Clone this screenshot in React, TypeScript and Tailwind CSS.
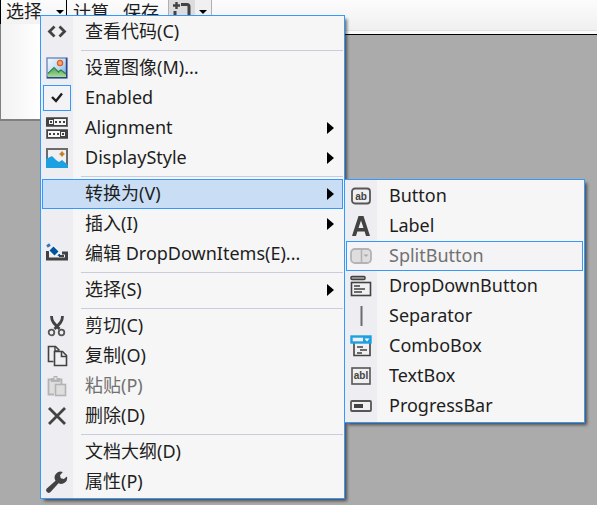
import type { ReactNode } from "react";

type Item = {
  label: string;
  icon?: ReactNode;
  submenu?: boolean;
  disabled?: boolean;
  state?: "open" | "hover";
  checkbox?: boolean;
};

function Icon({ children }: { children: ReactNode }) {
  return (
    <svg width="22" height="22" viewBox="0 0 22 22" fill="none" aria-hidden="true">
      {children}
    </svg>
  );
}

const ink = "#424242";

const codeIcon = (
  <Icon>
    <path d="M8.500 5.500 3.500 10.500l5 5M13.500 5.500l5 5-5 5" stroke={ink} strokeWidth="2.800" />
  </Icon>
);

const imageIcon = (
  <Icon>
    <defs>
      <linearGradient id="sky" x1="0" y1="0" x2="1" y2="1">
        <stop offset="0" stopColor="#f4f9ff" />
        <stop offset="0.5" stopColor="#c4dcf8" />
        <stop offset="1" stopColor="#6d9fe0" />
      </linearGradient>
      <linearGradient id="hill" x1="0" y1="0" x2="0" y2="1">
        <stop offset="0" stopColor="#4ea65a" />
        <stop offset="1" stopColor="#a9dc98" />
      </linearGradient>
    </defs>
    <rect x="1" y="1" width="20" height="20" fill="url(#sky)" stroke="#7089b8" strokeWidth="1.400" />
    <path d="M20.500 1v19.500H1" stroke="#2b4487" strokeWidth="1.400" />
    <circle cx="14" cy="6" r="2.600" fill="#f6a56b" stroke="#d9622b" strokeWidth="1.300" />
    <path d="M2 17l6-6 4 4 3-2 5 4v3H2z" fill="url(#hill)" />
    <path d="M2 16.500l6-6 5 5M12 15l3-2 5 4" stroke="#2f8040" strokeWidth="1.200" />
  </Icon>
);

const alignIcon = (
  <Icon>
    <rect x="0" y="0" width="22" height="10" rx="0.500" fill="#6b6b6b" />
    <rect x="0" y="1" width="21" height="8" fill={ink} />
    <rect x="8" y="2" width="12" height="6" fill="#f6f6f6" />
    <rect x="3" y="3" width="4" height="4" fill="#f6f6f6" />
    <path d="M4 4h2v2H4zM9 4h2v2H9zM13 4h2v2h-2zM17 4h2v2h-2z" fill={ink} />
    <rect x="0" y="12" width="22" height="10" rx="0.500" fill="#6b6b6b" />
    <rect x="1" y="13" width="21" height="8" fill={ink} />
    <rect x="2" y="14" width="12" height="6" fill="#f6f6f6" />
    <rect x="15" y="15" width="4" height="4" fill="#f6f6f6" />
    <path d="M3 16h2v2H3zM7 16h2v2H7zM11 16h2v2h-2zM16 16h2v2h-2z" fill={ink} />
  </Icon>
);

const pictureIcon = (
  <Icon>
    <rect x="1" y="2" width="20" height="18" fill="#f0eff1" stroke="#6b6b6b" strokeWidth="2" />
    <path d="M0 12l2-1 4-2 4 4 3 2 3-2 6 5v3H0z" fill="#1ba1e2" />
    <path d="M16 4.500v5M13.500 7h5" stroke="#c27d1a" strokeWidth="1.600" />
    <rect x="14.500" y="5.500" width="3" height="3" fill="#c27d1a" />
  </Icon>
);

const editIcon = (
  <Icon>
    <path d="M1.500 8v8h19v-6H16" stroke={ink} strokeWidth="3" />
    <path d="M13 13h5" stroke={ink} strokeWidth="2" />
    <path d="M5.500 5.500l5.500 5.500" stroke="#f6f6f6" strokeWidth="8" />
    <path d="M5.500 5.500l5 5" stroke="#00539c" strokeWidth="5.600" />
    <path d="M12 12.500l2 .5-.5-2z" fill="#00539c" stroke="#00539c" />
    <path d="M1 3.500l3-2" stroke="#2f78b8" strokeWidth="2.800" />
  </Icon>
);

const cutIcon = (
  <Icon>
    <path d="M5.500 1c0 5 2 7 8 13M16.500 1c0 5-2 7-8 13" stroke={ink} strokeWidth="2.800" />
    <circle cx="5.500" cy="17.500" r="2.800" stroke="#565656" strokeWidth="1.800" />
    <circle cx="15.500" cy="17.500" r="2.800" stroke="#565656" strokeWidth="1.800" />
  </Icon>
);

const copyIcon = (
  <Icon>
    <path d="M7.500 16.500h-5v-15h7l4 4" stroke={ink} strokeWidth="1.600" />
    <path d="M9 2v4h4" stroke={ink} strokeWidth="1.400" />
    <path d="M8.500 6.500h8l4 4v10h-12z" fill="#f0eff1" stroke={ink} strokeWidth="1.600" />
    <path d="M15.500 7v4.500H20" stroke={ink} strokeWidth="1.600" />
  </Icon>
);

const pasteIcon = (
  <Icon>
    <path d="M8 19.500H2.500v-15h13V9" fill="#dededf" stroke="#b3b3b3" strokeWidth="1.800" />
    <path d="M5 3h2.500V1h4v2H14v4H5z" fill="#b3b3b3" />
    <rect x="8.500" y="2.500" width="2" height="2" fill="#eeeef2" />
    <rect x="9.500" y="9.500" width="10" height="11" fill="#dededf" stroke="#b3b3b3" strokeWidth="1.600" />
  </Icon>
);

const deleteIcon = (
  <Icon>
    <path d="M3 3l16 16M19 3L3 19" stroke={ink} strokeWidth="2.800" />
  </Icon>
);

const wrenchIcon = (
  <Icon>
    <path
      d="M21 5.500a6 6 0 0 1-8.500 6.800L4.800 20.800a2.500 2.500 0 0 1-4-3.200L9.500 9.700A6 6 0 0 1 16.800 1L14 4.200l.8 3 3 .8z"
      fill={ink}
    />
  </Icon>
);

const buttonIcon = (
  <Icon>
    <rect x="2" y="3.500" width="18" height="15" rx="3" fill="#f0eff1" stroke="#565656" strokeWidth="1.800" />
    <text x="11" y="14.500" textAnchor="middle" fontSize="10" fontWeight="700" fontFamily="Liberation Sans, sans-serif" fill={ink}>
      ab
    </text>
  </Icon>
);

const labelIcon = (
  <Icon>
    <path d="M8.500 1h5L20 21h-4l-1.400-4.500H7.400L6 21H2zM11 5.500L8.500 13h5z" fill={ink} fillRule="evenodd" />
  </Icon>
);

const splitIcon = (
  <Icon>
    <rect x="1" y="4" width="20" height="14" rx="4" fill="#dededf" stroke="#b3b3b3" strokeWidth="1.800" />
    <path d="M11.500 4v14" stroke="#b3b3b3" strokeWidth="1.600" />
    <path d="M13.500 9.500h5L16 12z" fill="#a8a8a8" />
  </Icon>
);

const dropDownIcon = (
  <Icon>
    <rect x="1" y="1.500" width="14" height="3" rx="1" fill="#a8a8a8" stroke={ink} strokeWidth="1.500" />
    <rect x="1.500" y="7.500" width="19" height="13" fill="#f0eff1" stroke={ink} strokeWidth="1.600" />
    <path d="M4 11h6M4 14h11M4 17h8" stroke={ink} strokeWidth="1.500" />
  </Icon>
);

const separatorIcon = (
  <Icon>
    <path d="M11.500 1v20" stroke="#6b6b6b" strokeWidth="2" />
  </Icon>
);

const comboIcon = (
  <Icon>
    <path d="M4 8v12.500h16V8" fill="#f0eff1" stroke={ink} strokeWidth="1.600" />
    <path d="M7 12h6M10 15h7M7 18h5" stroke={ink} strokeWidth="1.500" />
    <rect x="1.500" y="1.500" width="19" height="6" fill="#f0eff1" stroke="#1ba1e2" strokeWidth="2.400" />
    <path d="M13 1h8v7h-8z" fill="#1ba1e2" />
    <path d="M14.500 3.500h5l-2.500 3z" fill="#ffffff" />
  </Icon>
);

const textBoxIcon = (
  <Icon>
    <rect x="2" y="3" width="18" height="16" fill="#f0eff1" stroke="#565656" strokeWidth="1.600" />
    <text x="11" y="14" textAnchor="middle" fontSize="10" fontWeight="700" fontFamily="Liberation Sans, sans-serif" fill={ink}>
      abl
    </text>
  </Icon>
);

const progressIcon = (
  <Icon>
    <rect x="1" y="6" width="20" height="10" rx="1" fill="#f0eff1" stroke="#565656" strokeWidth="1.800" />
    <rect x="4" y="9" width="9" height="4" fill={ink} />
  </Icon>
);

const mainGroups: Item[][] = [
  [{ label: "查看代码(C)", icon: codeIcon }],
  [
    { label: "设置图像(M)...", icon: imageIcon },
    { label: "Enabled", checkbox: true },
    { label: "Alignment", icon: alignIcon, submenu: true },
    { label: "DisplayStyle", icon: pictureIcon, submenu: true },
  ],
  [
    { label: "转换为(V)", submenu: true, state: "open" },
    { label: "插入(I)", submenu: true },
    { label: "编辑 DropDownItems(E)...", icon: editIcon },
  ],
  [{ label: "选择(S)", submenu: true }],
  [
    { label: "剪切(C)", icon: cutIcon },
    { label: "复制(O)", icon: copyIcon },
    { label: "粘贴(P)", icon: pasteIcon, disabled: true },
    { label: "删除(D)", icon: deleteIcon },
  ],
  [{ label: "文档大纲(D)" }, { label: "属性(P)", icon: wrenchIcon }],
];

const convertItems: Item[] = [
  { label: "Button", icon: buttonIcon },
  { label: "Label", icon: labelIcon },
  { label: "SplitButton", icon: splitIcon, disabled: true, state: "hover" },
  { label: "DropDownButton", icon: dropDownIcon },
  { label: "Separator", icon: separatorIcon },
  { label: "ComboBox", icon: comboIcon },
  { label: "TextBox", icon: textBoxIcon },
  { label: "ProgressBar", icon: progressIcon },
];

function MenuRow({ item }: { item: Item }) {
  if (item.checkbox) {
    return (
      <label className="relative flex h-[30px] items-center pl-0.5">
        <input
          type="checkbox"
          defaultChecked
          className="h-[26px] w-7 appearance-none border border-[#3399ff] bg-[#f3f3f5]"
        />
        <svg className="pointer-events-none absolute top-2 left-2" width="16" height="14" viewBox="0 0 16 14" fill="none" aria-hidden="true">
          <path d="M3 6l4 4 6-7.500" stroke="#1e1e1e" strokeWidth="2.400" />
        </svg>
        <span className="pb-0.5 pl-3.5 leading-6">{item.label}</span>
      </label>
    );
  }
  const state =
    item.state === "open"
      ? "border-[#3399ff] bg-[#c9def5]"
      : item.state === "hover"
        ? "border-[#3399ff] bg-[#f4f4f6]"
        : "border-transparent";
  return (
    <button
      type="button"
      disabled={item.disabled}
      className={`mx-px flex h-[30px] items-center border text-left ${state} ${item.disabled ? "text-[#717171]" : ""}`}
    >
      <span className="ml-[3px] w-[22px] shrink-0">{item.icon}</span>
      <span className="grow pb-0.5 pl-[17px] leading-6 whitespace-nowrap">{item.label}</span>
      {item.submenu && (
        <svg className="mr-2" width="7" height="12" viewBox="0 0 7 12" aria-hidden="true">
          <path d="M0 0l7 6-7 6z" fill="#000000" />
        </svg>
      )}
    </button>
  );
}

const menuBox =
  "absolute border border-[#3399ff] bg-[linear-gradient(to_right,#eeeef2_32px,#f6f6f6_32px)] py-px shadow-[3px_3px_3px_-1px_rgba(0,0,0,0.55)]";

export default function App() {
  return (
    <div className="relative min-h-screen overflow-hidden bg-[#ababab] font-['Noto_Sans','Noto_Sans_CJK_SC',sans-serif] text-lg text-[#1e1e1e]">
      <header className="border-b border-black bg-[#fbfcfa]">
        <div className="flex h-[31px] items-start border-b border-[#e3e3e3] bg-linear-to-b from-[#fcfcfc] to-[#f0f0f0]">
          <div className="flex h-6 w-[67px] items-center justify-between border-x border-black pr-0.5 pl-[5px]">
            <button type="button" className="pb-0.5 leading-6 whitespace-nowrap">选择</button>
            <svg width="8" height="4" viewBox="0 0 8 4" aria-hidden="true">
              <path d="M0 0h8L4 4z" fill="#000000" />
            </svg>
          </div>
          <button type="button" className="ml-1.5 h-6 pb-0.5 leading-6">计算</button>
          <button type="button" className="ml-3.5 h-6 pb-0.5 leading-6">保存</button>
          <button type="button" aria-label="添加" className="ml-[9px] flex h-6 items-start border border-t-0 border-[#b0b0b0] bg-[#f0f0f0]">
            <span className="flex h-6 w-[26px] bg-[#dcdcdc] pl-[3px]">
              <svg width="20" height="22" viewBox="0 0 20 22" fill="none" aria-hidden="true">
                <path d="M4.500 2v7M1 5.500h7" stroke={ink} strokeWidth="2.400" />
                <path d="M9 4.500h6a2 2 0 0 1 2 2V20H3v-9" stroke={ink} strokeWidth="3" />
              </svg>
            </span>
            <svg className="mr-1 ml-1 mt-2.5" width="8" height="4" viewBox="0 0 8 4" aria-hidden="true">
              <path d="M0 0h8L4 4z" fill="#000000" />
            </svg>
          </button>
        </div>
        <div className="h-[3px]" />
      </header>
      <main className="-mt-[11px] h-[97px] w-[280px] border-b-2 border-l border-[#808080] bg-linear-to-r from-[#f2f2f2] to-white to-[40px]" />

      <nav aria-label="上下文菜单" className={`${menuBox} top-[15px] left-10 flex w-[305px] flex-col`}>
        {mainGroups.map((group, index) => (
          <div key={group[0].label} className="flex flex-col">
            {index > 0 && <hr className="mt-[3px] mr-px mb-0.5 ml-10 border-[#cbcbe0]" />}
            {group.map((item) => (
              <MenuRow key={item.label} item={item} />
            ))}
          </div>
        ))}
      </nav>

      <nav aria-label="转换为" className={`${menuBox} top-[179px] left-[344px] flex w-[241px] flex-col`}>
        {convertItems.map((item) => (
          <MenuRow key={item.label} item={item} />
        ))}
      </nav>
    </div>
  );
}
